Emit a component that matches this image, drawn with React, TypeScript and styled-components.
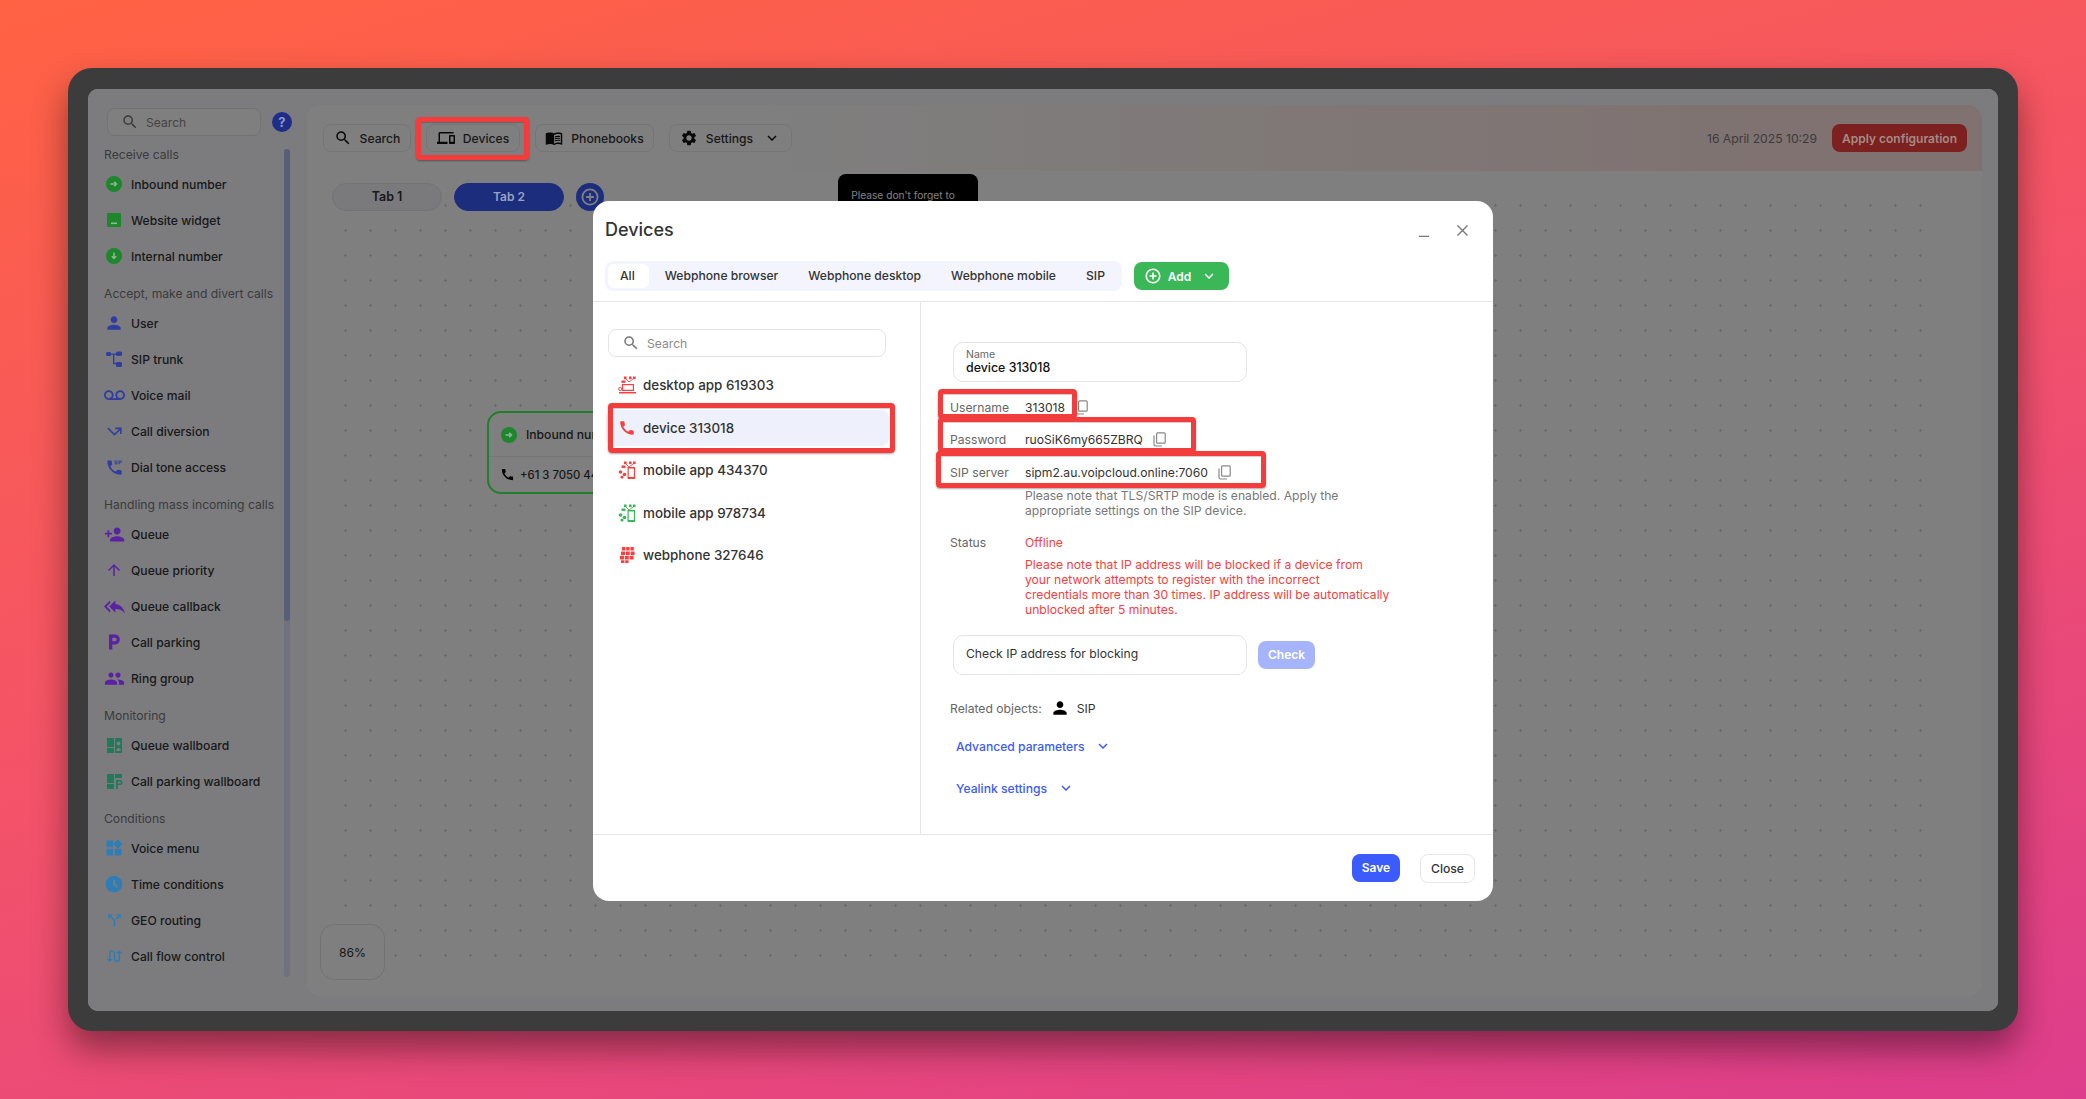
import React from 'react'
import styled, { createGlobalStyle } from 'styled-components'
import {
  MdAccessTimeFilled,
  MdCall,
  MdCallMissedOutgoing,
  MdCallSplit,
  MdDialerSip,
  MdArrowUpward,
  MdKeyboardArrowDown,
  MdLocalParking,
  MdMenuBook,
  MdOutlineDevices,
  MdPeople,
  MdPerson,
  MdPersonAdd,
  MdReplyAll,
  MdSearch,
  MdSettings,
  MdSwapCalls,
  MdVoicemail,
  MdWidgets,
} from 'react-icons/md'

const TEXT_SIZE = '12.15px'

const GlobalStyle = createGlobalStyle`
  html, body {
    margin: 0;
    padding: 0;
    height: 1099px;
    overflow: hidden;
  }
  body {
    font-family: Inter, "Noto Sans", sans-serif;
    font-size: 13px;
    color: #333;
  }
  * { box-sizing: border-box; }
`

const Page = styled.div`
  position: relative;
  width: 2086px;
  height: 1099px;
  padding: 68px;
  background: linear-gradient(165deg, #ff6243 0%, #f3526a 50%, #dd3d8c 100%);
`

const Frame = styled.div`
  width: 1950px;
  height: 963px;
  padding: 21px 20px 20px;
  background: #3c3c3c;
  border-radius: 24px;
  box-shadow: 0 18px 34px rgba(0, 0, 0, 0.42);
`

const AppWindow = styled.div`
  position: relative;
  display: flex;
  width: 100%;
  height: 100%;
  background: #f8f9ff;
  border-radius: 10px;
  overflow: hidden;
`

const Sidebar = styled.aside`
  width: 219px;
  flex-shrink: 0;
  padding-top: 19px;
`

const SearchRow = styled.div`
  display: flex;
  align-items: center;
  gap: 11px;
  margin-left: 19px;
  height: 28px;
`

const SearchBox = styled.div<{ $w: number }>`
  display: flex;
  align-items: center;
  gap: 7px;
  width: ${(p) => p.$w}px;
  height: 28px;
  padding-left: 13px;
  color: #8a8a8a;
  font-size: ${TEXT_SIZE};
  background: #fff;
  border: 1px solid #e4e4e4;
  border-radius: 8px;
  svg {
    color: #777;
    font-size: 18px;
  }
`

// the colours seen through the dim layer are more saturated than a plain
// black scrim allows, so these few parts paint above it with the final colour
const HelpBadge = styled.div`
  position: relative;
  z-index: 2;
  width: 20px;
  height: 20px;
  border-radius: 50%;
  background: #1f2d8a;
  color: #8f9ac4;
  font-size: 13px;
  font-weight: 700;
  line-height: 20px;
  text-align: center;
`

const SideBody = styled.div`
  display: flex;
  margin-top: 8px;
`

const SideList = styled.div`
  width: 196px;
`

const SideGroup = styled.div`
  margin-bottom: 9px;
`

const GroupLabel = styled.div`
  height: 22px;
  padding-left: 16px;
  color: #777;
  font-size: ${TEXT_SIZE};
  line-height: 22px;
  white-space: nowrap;
`

const SideItem = styled.div`
  display: flex;
  align-items: center;
  height: 36px;
  padding-left: 15px;
  color: #333;
  font-size: ${TEXT_SIZE};
  font-weight: 500;
  white-space: nowrap;
`

const SideIcon = styled.span<{ $color: string }>`
  position: relative;
  z-index: 2;
  display: flex;
  align-items: center;
  justify-content: center;
  width: 22px;
  margin-right: 6px;
  color: ${(p) => p.$color};
  font-size: 18px;
`

const ScrollTrack = styled.div`
  width: 6px;
  height: 828px;
  margin-top: 5px;
  background: #dfe3fb;
  border-radius: 3px;
`

const ScrollThumb = styled.div`
  height: 472px;
  background: #aebcf5;
  border-radius: 3px;
`

const Panel = styled.main`
  display: flex;
  flex-direction: column;
  width: 1675px;
  margin: 16px 0 15px;
  background: #fff;
  border-radius: 14px;
  overflow: hidden;
`

const TopBar = styled.header`
  display: flex;
  align-items: center;
  gap: 15px;
  height: 66px;
  flex-shrink: 0;
  padding: 0 15px 0 16px;
  background: linear-gradient(90deg, #fff 0%, #fff 25%, #ffe4e0 90%);
`

const ToolButton = styled.div<{ $w: number }>`
  display: flex;
  align-items: center;
  justify-content: center;
  gap: 8px;
  width: ${(p) => p.$w}px;
  height: 28px;
  color: #333;
  font-size: ${TEXT_SIZE};
  font-weight: 500;
  background: transparent;
  border: 1px solid #eaeaea;
  border-radius: 8px;
  svg {
    font-size: 18px;
    color: #111;
  }
`

const Caret = styled(MdKeyboardArrowDown)`
  font-size: 18px;
  margin-left: 2px;
`

const TopRight = styled.div`
  display: flex;
  align-items: center;
  gap: 15px;
  margin-left: auto;
`

const DateText = styled.span`
  color: #777;
  font-size: ${TEXT_SIZE};
`

const ApplyButton = styled.div`
  display: flex;
  align-items: center;
  justify-content: center;
  width: 135px;
  height: 28px;
  background: #f84040;
  border-radius: 8px;
`

const LitText = styled.span<{ $color: string }>`
  position: relative;
  z-index: 2;
  color: ${(p) => p.$color};
  font-size: 12px;
  font-weight: 600;
`

const Canvas = styled.section`
  position: relative;
  flex: 1;
  &::before {
    content: '';
    position: absolute;
    top: 22px;
    left: 26px;
    right: 49px;
    bottom: 31px;
    background-image: radial-gradient(circle, #d4d4d4 1.1px, transparent 1.4px);
    background-size: 25px 25px;
  }
`

const TabRow = styled.div`
  position: relative;
  display: flex;
  align-items: center;
  gap: 12px;
  padding: 12px 0 0 25px;
`

const FlowTab = styled.div<{ $active?: boolean }>`
  width: 110px;
  height: 28px;
  color: #333;
  font-size: 12.5px;
  font-weight: 600;
  line-height: 26px;
  text-align: center;
  background: ${(p) => (p.$active ? '#3b5bfd' : '#f4f5fb')};
  border: 1px solid ${(p) => (p.$active ? '#3b5bfd' : '#e4e6ee')};
  border-radius: 14px;
`

const AddCircle = styled.div`
  display: flex;
  align-items: center;
  justify-content: center;
  width: 28px;
  height: 28px;
  background: #3b5bfd;
  border-radius: 50%;
`

const Tip = styled.div`
  position: absolute;
  left: 531px;
  top: 3px;
  width: 140px;
  height: 60px;
  padding: 14px 10px 0 0;
  color: #fff;
  font-size: 10.2px;
  line-height: 15px;
  text-align: center;
  background: #000;
  border-radius: 8px;
`

const FlowNode = styled.div`
  position: absolute;
  left: 180px;
  top: 240px;
  width: 250px;
  height: 83px;
  background: #fff;
  border: 2px solid #42ff58;
  border-radius: 14px;
`

const NodeHead = styled.div`
  display: flex;
  align-items: center;
  height: 44px;
  padding-left: 9px;
  font-size: ${TEXT_SIZE};
  font-weight: 500;
  color: #333;
  border-bottom: 1px solid #eee;
`

const NodeBody = styled.div`
  display: flex;
  align-items: center;
  gap: 5px;
  height: 35px;
  padding-left: 11px;
  color: #333;
  font-size: 11.3px;
  font-weight: 500;
  svg {
    color: #000;
    font-size: 15px;
  }
`

const ZoomBadge = styled.div`
  position: absolute;
  left: 13px;
  top: 753px;
  width: 65px;
  height: 56px;
  color: #333;
  font-size: ${TEXT_SIZE};
  line-height: 56px;
  text-align: center;
  background: #fff;
  border: 1px solid #e4e4e4;
  border-radius: 14px;
`

const Overlay = styled.div`
  position: absolute;
  inset: 0;
  padding: 112px 0 0 505px;
  background: rgba(0, 0, 0, 0.5);
`

const Modal = styled.div`
  display: flex;
  flex-direction: column;
  width: 900px;
  height: 700px;
  background: #fff;
  border-radius: 16px;
  overflow: hidden;
`

const ModalHead = styled.div`
  position: relative;
  height: 101px;
  flex-shrink: 0;
  padding: 16px 12px 0;
  border-bottom: 1px solid #e6e6e6;
`

const ModalTitle = styled.h2`
  margin: 0;
  height: 28px;
  color: #333;
  font-size: 18px;
  font-weight: 500;
  line-height: 26px;
`

const WindowControls = styled.div`
  position: absolute;
  top: 24px;
  right: 25px;
  display: flex;
  align-items: flex-start;
  gap: 28px;
`

const FilterRow = styled.div`
  display: flex;
  align-items: center;
  gap: 12px;
  margin-top: 16px;
`

const FilterTabs = styled.div`
  display: flex;
  align-items: center;
  gap: 2px;
  height: 30px;
  padding: 0 3px;
  background: #f3f4fd;
  border-radius: 8px;
`

const FilterTab = styled.div<{ $active?: boolean }>`
  height: 24px;
  padding: ${(p) => (p.$active ? '0 14px 0 12px' : '0 14px')};
  color: #333;
  font-size: ${TEXT_SIZE};
  font-weight: 500;
  line-height: 24px;
  background: ${(p) => (p.$active ? '#fff' : 'transparent')};
  border-radius: 6px;
`

const AddButton = styled.div`
  display: flex;
  align-items: center;
  justify-content: center;
  gap: 7px;
  width: 95px;
  height: 28px;
  color: #fff;
  font-size: 12px;
  font-weight: 600;
  background: #3ab857;
  border-radius: 8px;
`

const ModalBody = styled.div`
  display: flex;
  flex: 1;
`

const ListColumn = styled.div`
  width: 328px;
  flex-shrink: 0;
  padding: 27px 0 0 13px;
  border-right: 1px solid #e6e6e6;
`

const ListSearch = styled(SearchBox)`
  margin-left: 2px;
`

const DeviceList = styled.div`
  display: flex;
  flex-direction: column;
  gap: 6.5px;
  margin-top: 10px;
`

const DeviceRow = styled.div<{ $active?: boolean }>`
  display: flex;
  align-items: center;
  gap: 7px;
  width: 283px;
  height: 36px;
  padding-left: 12px;
  color: #333;
  font-size: 13.4px;
  font-weight: 500;
  background: ${(p) => (p.$active ? '#eef1fb' : 'transparent')};
  border-radius: 8px;
`

const FormColumn = styled.div`
  flex: 1;
  padding: 40px 0 0 29px;
`

const InputBox = styled.div`
  width: 294px;
  height: 40px;
  margin-left: 3px;
  padding: 6px 12px;
  background: #fff;
  border: 1px solid #e4e4e4;
  border-radius: 10px;
`

const InputLabel = styled.div`
  color: #666;
  font-size: 10.5px;
  line-height: 12px;
`

const InputValue = styled.div`
  color: #111;
  font-size: 12.4px;
  font-weight: 500;
  line-height: 14px;
`

const Credentials = styled.div`
  margin-top: 9.5px;
`

const FieldRow = styled.div`
  display: flex;
  align-items: center;
  height: 32.33px;
`

const FieldLabel = styled.span`
  width: 75px;
  flex-shrink: 0;
  color: #666;
  font-size: ${TEXT_SIZE};
`

const FieldValue = styled.span`
  margin-right: 10px;
  color: #333;
  font-size: ${TEXT_SIZE};
`

const Note = styled.div<{ $danger?: boolean }>`
  margin-left: 75px;
  color: ${(p) => (p.$danger ? '#f84040' : '#777')};
  font-size: ${TEXT_SIZE};
  line-height: 15px;
  white-space: nowrap;
`

const StatusRow = styled.div`
  display: flex;
  align-items: center;
  height: 20px;
  margin-top: 14px;
  margin-bottom: 5px;
`

const StatusValue = styled.span`
  color: #f84040;
  font-size: ${TEXT_SIZE};
`

const CheckRow = styled.div`
  display: flex;
  align-items: center;
  gap: 11px;
  margin-top: 18px;
`

const CheckInput = styled(InputBox)`
  padding: 0 12px;
  color: #333;
  font-size: ${TEXT_SIZE};
  line-height: 36px;
`

const CheckButton = styled.div`
  width: 57px;
  height: 28px;
  color: #fff;
  font-size: 12px;
  font-weight: 600;
  line-height: 28px;
  text-align: center;
  background: #a6b4fb;
  border-radius: 8px;
`

const RelatedRow = styled.div`
  display: flex;
  align-items: center;
  height: 20px;
  margin-top: 23px;
  color: #666;
  font-size: ${TEXT_SIZE};
`

const RelatedIcon = styled(MdPerson)`
  margin: 0 7px 0 8px;
  color: #000;
  font-size: 20px;
`

const RelatedName = styled.span`
  color: #333;
`

const Disclosure = styled.div<{ $top: number }>`
  display: flex;
  align-items: center;
  gap: 8px;
  height: 20px;
  margin-top: ${(p) => p.$top}px;
  margin-left: 6px;
  color: #3b5bfd;
  font-size: ${TEXT_SIZE};
  font-weight: 500;
`

const ModalFoot = styled.div`
  display: flex;
  align-items: center;
  justify-content: flex-end;
  gap: 20px;
  height: 67px;
  flex-shrink: 0;
  padding-right: 18px;
  border-top: 1px solid #e6e6e6;
`

const SaveButton = styled.div`
  width: 48px;
  height: 28px;
  color: #fff;
  font-size: 12px;
  font-weight: 600;
  line-height: 28px;
  text-align: center;
  background: #3b5bfd;
  border-radius: 8px;
`

const CloseButton = styled.div`
  width: 55px;
  height: 29px;
  color: #333;
  font-size: ${TEXT_SIZE};
  font-weight: 500;
  line-height: 27px;
  text-align: center;
  background: #fff;
  border: 1px solid #e6e6e6;
  border-radius: 8px;
`

const Callout = styled.div<{ $x: number; $y: number; $w: number; $h: number }>`
  position: absolute;
  left: ${(p) => p.$x}px;
  top: ${(p) => p.$y}px;
  width: ${(p) => p.$w}px;
  height: ${(p) => p.$h}px;
  border: 5.5px solid #f33d3d;
  border-radius: 4px;
  box-shadow: 0 1px 2px rgba(0, 0, 0, 0.35), inset 0 1px 1px rgba(0, 0, 0, 0.2);
`

const CircleArrow = ({ down }: { down?: boolean }) => (
  <svg width="18" height="18" viewBox="0 0 18 18">
    <circle cx="9" cy="9" r="8" fill="currentColor" />
    {down ? (
      <path d="M9 5.5v6M6.8 9.2 9 11.5l2.2-2.3" stroke="#8fb796" strokeWidth="1.5" fill="none" />
    ) : (
      <path d="M5.5 9h6M9.2 6.8 11.5 9l-2.3 2.2" stroke="#8fb796" strokeWidth="1.5" fill="none" />
    )}
  </svg>
)

const WidgetIcon = () => (
  <svg width="16" height="16" viewBox="0 0 16 16">
    <rect x="1" y="1" width="14" height="14" rx="1" fill="currentColor" />
    <rect x="5" y="10.5" width="6" height="1.6" fill="#8fb796" />
  </svg>
)

const TrunkIcon = () => (
  <svg width="18" height="18" viewBox="0 0 18 18" fill="currentColor">
    <rect x="1" y="2" width="5" height="4" rx="1.5" />
    <rect x="11" y="1.5" width="6" height="4.5" rx="1.5" />
    <rect x="11" y="12" width="6" height="5" rx="1.5" />
    <path d="M5 3.4h7v1.4H9.4v8h2.6v1.4H8V4.8H5z" />
  </svg>
)

const WallboardIcon = () => (
  <svg width="17" height="17" viewBox="0 0 17 17" fill="currentColor">
    <rect x="1" y="1" width="7" height="9" />
    <rect x="1" y="11" width="7" height="5" />
    <path d="M9 1h7v15H9zm3.5 3.5a2 2 0 1 0 0 4 2 2 0 0 0 0-4zM10.2 14h4.6c0-1.8-1-3-2.3-3s-2.3 1.2-2.3 3z" fillRule="evenodd" />
  </svg>
)

const ParkingBoardIcon = () => (
  <svg width="17" height="17" viewBox="0 0 17 17" fill="currentColor">
    <rect x="1" y="1" width="7" height="9" />
    <rect x="1" y="11" width="7" height="5" />
    <rect x="9" y="1" width="7" height="4" />
    <path d="M10 7h4a2.4 2.4 0 0 1 0 5h-2.2v4H10zm1.8 1.6v1.8H14a.9.9 0 0 0 0-1.8z" />
  </svg>
)

const PlusRing = ({ size }: { size: number }) => (
  <svg width={size} height={size} viewBox="0 0 18 18" fill="none" stroke="#fff" strokeWidth="1.8">
    <circle cx="9" cy="9" r="7.6" />
    <path d="M9 5v8M5 9h8" />
  </svg>
)

const CopyIcon = () => (
  <svg width="13" height="15" viewBox="0 0 13 15" fill="none" stroke="#888" strokeWidth="1.2">
    <rect x="3.6" y="0.8" width="8.6" height="10.4" rx="1" />
    <path d="M1 3.5V12.6A1.4 1.4 0 0 0 2.4 14H9" />
  </svg>
)

const SipMesh = ({ children }: { children: React.ReactNode }) => (
  <svg width="18" height="18" viewBox="0 0 18 18" fill="currentColor">
    <rect x="6" y="0.5" width="2.6" height="2.6" />
    <rect x="11" y="0.5" width="2.6" height="2.6" />
    <rect x="15" y="0.5" width="2.6" height="2.6" />
    <rect x="3.5" y="4.5" width="4" height="2.4" />
    <path d="M8 3l3 3 4-3" stroke="currentColor" strokeWidth="0.9" fill="none" />
    {children}
  </svg>
)

const DesktopAppIcon = () => (
  <SipMesh>
    <path d="M4 8h12v7H4zm1.2 1.2v4.6h9.6V9.2zM1 16h17v1.4H1z" fillRule="evenodd" />
    <circle cx="2.2" cy="13" r="1.6" fill="none" stroke="currentColor" strokeWidth="0.9" />
  </SipMesh>
)

const MobileAppIcon = () => (
  <SipMesh>
    <circle cx="2.5" cy="11" r="1.8" />
    <circle cx="6.5" cy="13.5" r="1.8" />
    <circle cx="4" cy="16" r="1.6" />
    <path d="M9.5 6h7.6v12H9.5zm1.2 1.5v8.5h5.2V7.5z" fillRule="evenodd" />
  </SipMesh>
)

const WebphoneIcon = () => (
  <svg width="18" height="18" viewBox="0 0 18 18" fill="currentColor">
    <path d="M4 1h3.4v3.6H4zm4.2 0h3.4v3.6H8.2zm4.2 0h3.4v3.6h-3.4zM3 5.4h4v3.6H3zm4.8 0h4v3.6h-4zm4.8 0h4v3.6h-4zM2 9.8h4v3.6H2zm4.8 0h4v3.6h-4zm4.8 0h4v3.6h-4zM3 14.2h3.4V17H3zm4.2 0h3.4V17H7.2z" />
  </svg>
)

const GREEN = '#1e872d'
const BLUE = '#2f3da0'
const PURPLE = '#5a22a0'
const TEAL = '#1f7a5a'
const SKY = '#2f7db5'

const groups = [
  {
    label: 'Receive calls',
    items: [
      { name: 'Inbound number', color: GREEN, icon: <CircleArrow /> },
      { name: 'Website widget', color: GREEN, icon: <WidgetIcon /> },
      { name: 'Internal number', color: GREEN, icon: <CircleArrow down /> },
    ],
  },
  {
    label: 'Accept, make and divert calls',
    items: [
      { name: 'User', color: BLUE, icon: <MdPerson size={20} /> },
      { name: 'SIP trunk', color: BLUE, icon: <TrunkIcon /> },
      { name: 'Voice mail', color: BLUE, icon: <MdVoicemail size={21} /> },
      { name: 'Call diversion', color: BLUE, icon: <MdCallMissedOutgoing size={19} /> },
      { name: 'Dial tone access', color: BLUE, icon: <MdDialerSip size={19} /> },
    ],
  },
  {
    label: 'Handling mass incoming calls',
    items: [
      { name: 'Queue', color: PURPLE, icon: <MdPersonAdd size={21} /> },
      { name: 'Queue priority', color: PURPLE, icon: <MdArrowUpward size={18} /> },
      { name: 'Queue callback', color: PURPLE, icon: <MdReplyAll size={21} /> },
      { name: 'Call parking', color: PURPLE, icon: <MdLocalParking size={20} /> },
      { name: 'Ring group', color: PURPLE, icon: <MdPeople size={21} /> },
    ],
  },
  {
    label: 'Monitoring',
    items: [
      { name: 'Queue wallboard', color: TEAL, icon: <WallboardIcon /> },
      { name: 'Call parking wallboard', color: TEAL, icon: <ParkingBoardIcon /> },
    ],
  },
  {
    label: 'Conditions',
    items: [
      { name: 'Voice menu', color: SKY, icon: <MdWidgets size={20} /> },
      { name: 'Time conditions', color: SKY, icon: <MdAccessTimeFilled size={20} /> },
      { name: 'GEO routing', color: SKY, icon: <MdCallSplit size={19} /> },
      { name: 'Call flow control', color: SKY, icon: <MdSwapCalls size={19} /> },
    ],
  },
]

const devices = [
  { name: 'desktop app 619303', color: '#f84040', icon: <DesktopAppIcon /> },
  { name: 'device 313018', color: '#f84040', icon: <MdCall size={18} />, active: true },
  { name: 'mobile app 434370', color: '#f84040', icon: <MobileAppIcon /> },
  { name: 'mobile app 978734', color: '#3ab857', icon: <MobileAppIcon /> },
  { name: 'webphone 327646', color: '#f84040', icon: <WebphoneIcon /> },
]

const DeviceGlyph = styled.span<{ $color: string }>`
  display: flex;
  width: 18px;
  justify-content: center;
  color: ${(p) => p.$color};
`

const callouts = [
  { x: 416, y: 117, w: 113, h: 43 },
  { x: 608, y: 403, w: 287, h: 50 },
  { x: 938, y: 389, w: 139, h: 30 },
  { x: 938, y: 417, w: 258, h: 36 },
  { x: 936, y: 451, w: 330, h: 37 },
]

export default function App() {
  return (
    <Page>
      <GlobalStyle />
      <Frame>
        <AppWindow>
          <Sidebar>
            <SearchRow>
              <SearchBox $w={154}>
                <MdSearch />
                Search
              </SearchBox>
              <HelpBadge>?</HelpBadge>
            </SearchRow>
            <SideBody>
              <SideList>
                {groups.map((group) => (
                  <SideGroup key={group.label}>
                    <GroupLabel>{group.label}</GroupLabel>
                    {group.items.map((item) => (
                      <SideItem key={item.name}>
                        <SideIcon $color={item.color}>{item.icon}</SideIcon>
                        {item.name}
                      </SideItem>
                    ))}
                  </SideGroup>
                ))}
              </SideList>
              <ScrollTrack>
                <ScrollThumb />
              </ScrollTrack>
            </SideBody>
          </Sidebar>
          <Panel>
            <TopBar>
              <ToolButton $w={88}>
                <MdSearch />
                Search
              </ToolButton>
              <ToolButton $w={94}>
                <MdOutlineDevices />
                Devices
              </ToolButton>
              <ToolButton $w={119}>
                <MdMenuBook />
                Phonebooks
              </ToolButton>
              <ToolButton $w={123}>
                <MdSettings />
                Settings
                <Caret />
              </ToolButton>
              <TopRight>
                <DateText>16 April 2025 10:29</DateText>
                <ApplyButton>
                  <LitText $color="#a48c84">Apply configuration</LitText>
                </ApplyButton>
              </TopRight>
            </TopBar>
            <Canvas>
              <TabRow>
                <FlowTab>Tab 1</FlowTab>
                <FlowTab $active>
                  <LitText $color="#98a2c0">Tab 2</LitText>
                </FlowTab>
                <AddCircle>
                  <PlusRing size={18} />
                </AddCircle>
              </TabRow>
              <Tip>Please don't forget to</Tip>
              <FlowNode>
                <NodeHead>
                  <SideIcon $color={GREEN}>
                    <CircleArrow />
                  </SideIcon>
                  Inbound number
                </NodeHead>
                <NodeBody>
                  <MdCall />
                  +61 3 7050 4444
                </NodeBody>
              </FlowNode>
              <ZoomBadge>86%</ZoomBadge>
            </Canvas>
          </Panel>
          <Overlay>
            <Modal>
              <ModalHead>
                <ModalTitle>Devices</ModalTitle>
                <WindowControls>
                  <svg width="10" height="12" viewBox="0 0 10 12" stroke="#777" strokeWidth="1.6">
                    <path d="M0 11.5h10" />
                  </svg>
                  <svg width="11" height="11" viewBox="0 0 11 11" stroke="#777" strokeWidth="1.4">
                    <path d="M.5.5l10 10M10.5.5l-10 10" />
                  </svg>
                </WindowControls>
                <FilterRow>
                  <FilterTabs>
                    <FilterTab $active>All</FilterTab>
                    <FilterTab>Webphone browser</FilterTab>
                    <FilterTab>Webphone desktop</FilterTab>
                    <FilterTab>Webphone mobile</FilterTab>
                    <FilterTab>SIP</FilterTab>
                  </FilterTabs>
                  <AddButton>
                    <PlusRing size={16} />
                    Add
                    <Caret />
                  </AddButton>
                </FilterRow>
              </ModalHead>
              <ModalBody>
                <ListColumn>
                  <ListSearch $w={278}>
                    <MdSearch />
                    Search
                  </ListSearch>
                  <DeviceList>
                    {devices.map((device) => (
                      <DeviceRow key={device.name} $active={device.active}>
                        <DeviceGlyph $color={device.color}>{device.icon}</DeviceGlyph>
                        {device.name}
                      </DeviceRow>
                    ))}
                  </DeviceList>
                </ListColumn>
                <FormColumn>
                  <InputBox>
                    <InputLabel>Name</InputLabel>
                    <InputValue>device 313018</InputValue>
                  </InputBox>
                  <Credentials>
                    <FieldRow>
                      <FieldLabel>Username</FieldLabel>
                      <FieldValue>313018</FieldValue>
                      <CopyIcon />
                    </FieldRow>
                    <FieldRow>
                      <FieldLabel>Password</FieldLabel>
                      <FieldValue>ruoSiK6my665ZBRQ</FieldValue>
                      <CopyIcon />
                    </FieldRow>
                    <FieldRow>
                      <FieldLabel>SIP server</FieldLabel>
                      <FieldValue>sipm2.au.voipcloud.online:7060</FieldValue>
                      <CopyIcon />
                    </FieldRow>
                  </Credentials>
                  <Note>
                    Please note that TLS/SRTP mode is enabled. Apply the
                    <br />
                    appropriate settings on the SIP device.
                  </Note>
                  <StatusRow>
                    <FieldLabel>Status</FieldLabel>
                    <StatusValue>Offline</StatusValue>
                  </StatusRow>
                  <Note $danger>
                    Please note that IP address will be blocked if a device from
                    <br />
                    your network attempts to register with the incorrect
                    <br />
                    credentials more than 30 times. IP address will be automatically
                    <br />
                    unblocked after 5 minutes.
                  </Note>
                  <CheckRow>
                    <CheckInput>Check IP address for blocking</CheckInput>
                    <CheckButton>Check</CheckButton>
                  </CheckRow>
                  <RelatedRow>
                    Related objects:
                    <RelatedIcon />
                    <RelatedName>SIP</RelatedName>
                  </RelatedRow>
                  <Disclosure $top={18}>
                    Advanced parameters
                    <Caret />
                  </Disclosure>
                  <Disclosure $top={22}>
                    Yealink settings
                    <Caret />
                  </Disclosure>
                </FormColumn>
              </ModalBody>
              <ModalFoot>
                <SaveButton>Save</SaveButton>
                <CloseButton>Close</CloseButton>
              </ModalFoot>
            </Modal>
          </Overlay>
        </AppWindow>
      </Frame>
      {callouts.map((box) => (
        <Callout key={`${box.x}-${box.y}`} $x={box.x} $y={box.y} $w={box.w} $h={box.h} />
      ))}
    </Page>
  )
}
